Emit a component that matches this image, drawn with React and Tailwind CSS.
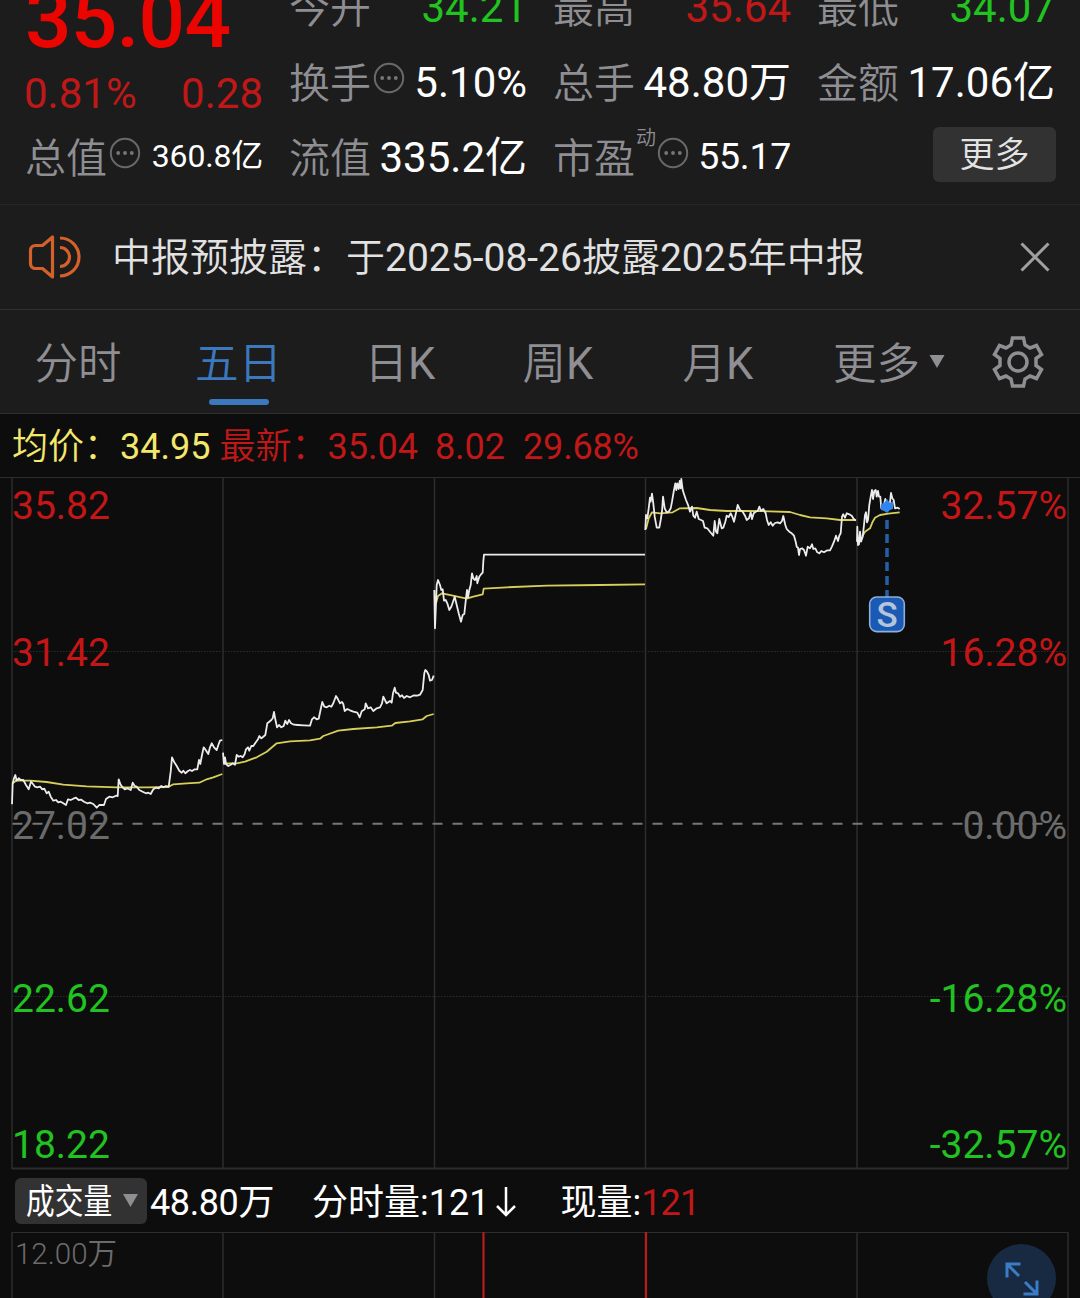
import React from 'react';
import clsx from 'clsx';

const FONT = 'font-[Roboto,"Noto_Sans_CJK_SC",sans-serif]';
const THIN_CJK = 'font-["Noto_Sans_CJK_SC_DemiLight","Noto_Sans_CJK_SC",sans-serif]';

// x,y pairs in thirds of a pixel, relative to each day's origin
const DAYS = [
  {
    origin: [0, 650],
    price:
      '36,463 38,400 42,385 46,375 50,392 56,385 62,390 70,390 78,405 86,418 93,395 99,402 105,410 112,412 120,410 127,418 133,416 140,430 146,425 152,440 160,452 168,450 175,457 182,455 190,460 198,465 204,448 212,450 220,446 228,443 236,450 244,449 252,455 262,460 270,458 280,462 290,473 298,465 306,465 312,465 318,447 328,440 338,442 348,437 353,438 356,388 361,402 366,410 374,418 382,415 392,420 398,398 404,408 410,410 418,420 428,425 438,430 445,428 452,432 460,418 468,413 476,415 484,408 490,412 498,408 506,410 512,365 516,322 522,335 530,348 538,362 545,368 550,362 556,370 564,363 570,360 576,363 584,358 592,358 597,330 601,342 606,315 611,292 617,300 625,312 630,292 635,280 642,292 650,300 656,282 660,272 667,270',
    average:
      '38,400 48,392 90,392 140,396 190,404 260,409 350,412 440,412 505,411 520,403 560,400 598,398 620,388 640,382 667,372',
  },
  {
    origin: [210, 640],
    price:
      '39,338 42,372 45,352 48,372 55,378 62,374 68,370 75,374 80,345 86,350 92,348 98,352 104,342 108,328 114,322 118,332 124,318 130,318 138,306 144,298 148,288 154,295 160,290 166,285 172,250 178,245 184,240 188,235 192,216 196,238 201,262 207,255 214,262 221,258 226,242 232,252 237,240 243,250 252,254 264,255 280,256 300,257 306,238 312,232 320,238 326,236 332,208 337,186 343,200 350,202 358,197 364,200 370,190 378,168 384,178 390,190 396,186 400,192 404,213 412,207 420,211 430,215 442,218 449,232 455,214 464,208 467,190 474,205 482,202 490,213 500,205 510,202 516,190 520,170 526,182 530,190 540,183 545,188 549,160 554,143 558,158 564,160 570,170 576,166 582,174 590,168 600,172 612,166 622,167 630,164 638,150 640,130 643,100 646,90 651,95 656,105 660,122 666,120 671,107',
    average:
      '45,370 80,370 105,365 140,352 170,335 200,310 240,304 300,301 330,296 340,288 385,272 430,267 500,262 545,257 556,249 600,244 638,238 650,228 671,222',
  },
  {
    origin: [420, 470],
    price:
      '43,360 45,475 48,400 50,345 54,330 60,345 64,360 68,358 72,392 77,390 82,400 88,420 94,410 98,398 104,380 110,405 116,430 123,455 128,435 133,432 138,385 141,360 144,382 148,360 152,345 156,310 160,325 165,330 170,318 172,340 178,320 184,312 188,308 190,275 192,254 675,254',
    average:
      '48,400 54,378 66,370 95,376 140,386 160,380 188,373 191,356 260,352 380,347 540,345 675,343',
  },
  {
    origin: [630, 465],
    price:
      '46,195 48,150 52,160 56,130 60,98 62,110 66,86 70,115 74,155 80,188 88,188 92,165 96,140 99,95 104,130 110,142 116,140 122,130 126,110 131,80 136,55 139,75 142,55 146,72 149,48 152,70 154,42 158,75 163,90 168,105 175,122 180,140 186,125 190,152 195,158 200,140 206,162 213,165 219,168 224,188 232,190 240,200 250,212 254,168 258,200 262,205 268,162 275,190 280,188 286,170 290,152 296,156 302,145 307,155 312,170 317,148 323,120 330,135 338,140 345,152 350,165 357,160 362,142 366,162 371,145 377,140 383,138 388,125 393,138 400,132 407,145 411,165 416,180 422,172 428,182 435,174 443,172 450,175 456,168 460,153 466,180 470,192 478,200 485,205 492,212 497,230 500,245 504,248 507,270 510,252 516,250 522,255 528,272 533,245 540,250 546,238 550,252 556,250 562,262 568,265 574,258 582,262 592,256 600,256 606,244 612,230 618,212 624,228 628,212 632,205 636,155 640,148 645,158 650,145 658,148 665,152 670,160 677,167',
    average:
      '48,192 56,160 66,142 90,145 128,142 150,130 200,129 240,135 290,138 350,138 420,139 480,141 510,150 540,157 590,160 630,165 678,165',
  },
  {
    origin: [840, 465],
    price:
      '51,230 52,185 54,240 57,238 60,200 63,230 68,215 72,180 75,150 78,142 81,172 84,165 88,120 92,95 96,75 99,102 103,78 107,75 110,95 114,78 117,95 121,95 124,130 130,130 136,102 142,120 149,120 153,84 157,100 161,105 165,130 173,128 179,132',
    average: '66,215 75,200 90,190 98,170 105,158 120,150 145,146 179,142',
  },
];

const DIVIDERS = [223, 434.5, 645.5, 857];

const AXIS = [
  { price: '35.82', pct: '32.57%', color: 'text-[#c41616]', pos: 'mt-[9px]' },
  { price: '31.42', pct: '16.28%', color: 'text-[#c41616]', pos: 'mt-[107px]' },
  { price: '27.02', pct: '0.00%', color: 'text-[#6b6b6b]', pos: 'mt-[133px]' },
  { price: '22.62', pct: '-16.28%', color: 'text-[#21c321]', pos: 'mt-[133px]' },
  { price: '18.22', pct: '-32.57%', color: 'text-[#21c321]', pos: 'mt-[106px]' },
];

const toPoints = ([ox, oy], pairs) =>
  pairs
    .split(' ')
    .map((p) => {
      const [x, y] = p.split(',').map(Number);
      return `${(ox + x / 3).toFixed(1)},${(oy + y / 3).toFixed(1)}`;
    })
    .join(' ');

const InfoDots = ({ className }) => (
  <svg viewBox="0 0 32 32" className={clsx('size-8 shrink-0', className)} fill="none">
    <circle cx="16" cy="16" r="14.2" stroke="#69696b" strokeWidth="2" />
    <circle cx="9.2" cy="16" r="1.9" fill="#77777a" />
    <circle cx="16" cy="16" r="1.9" fill="#77777a" />
    <circle cx="22.8" cy="16" r="1.9" fill="#77777a" />
  </svg>
);

const Cell = ({ label, value, info, sup, color = 'text-white', size = 'text-[42px]' }) => (
  <div className="flex h-[75px] items-center whitespace-nowrap">
    <span className={clsx('pb-[5px] text-[41px] leading-[60px] font-[350] text-[#8e8e93]', THIN_CJK)}>{label}</span>
    {sup && <span className="-mt-10 ml-px text-[20px] font-[350] text-[#8e8e93]">{sup}</span>}
    {info && <InfoDots className={clsx('-mt-[9px]', sup ? 'ml-px' : 'ml-0.5')} />}
    <span className={clsx('ml-auto', size, color)}>{value}</span>
  </div>
);

const Quote = () => (
  <header className="grid h-[205px] grid-cols-4 gap-x-[26px] overflow-hidden border-b border-[#262626] bg-[#1c1c1c] px-[25px]">
    <div className="-mt-7">
      <div className="h-[94px] text-[82px] leading-[94px] font-medium tracking-[-0.8px] text-[#eb0500]">35.04</div>
      <div className="-ml-px flex h-[54px] items-center justify-between text-[42px] text-[#c01818]">
        <span>0.81%</span>
        <span>0.28</span>
      </div>
      <Cell label="总值" value="360.8亿" info size="text-[32px] tracking-[-0.2px] pb-[3px]" />
    </div>
    <div className="-mt-[30px]">
      <Cell label="今开" value="34.21" color="text-[#21c321]" />
      <Cell label="换手" value="5.10%" info />
      <Cell label="流值" value="335.2亿" />
    </div>
    <div className="-mt-[30px]">
      <Cell label="最高" value="35.64" color="text-[#c01818]" />
      <Cell label="总手" value="48.80万" />
      <Cell label="市盈" value="55.17" info sup="动" size="text-[37.5px] tracking-[-0.3px] pb-0.5" />
    </div>
    <div className="-mt-[30px]">
      <Cell label="最低" value="34.07" color="text-[#21c321]" />
      <Cell label="金额" value="17.06亿" />
      <div className="-mr-px flex h-[69px] items-center justify-end">
        <button className="h-[55px] w-[123px] rounded-md bg-[#323232] pt-0.5 text-[35px] leading-none font-[350] text-[#e4e4e4]">更多</button>
      </div>
    </div>
  </header>
);

const Notice = () => (
  <div className="flex h-[105px] items-center border-b border-[#303030] bg-[#1c1c1c] pr-[29px] pl-7">
    <svg viewBox="0 0 54 46" className="h-[46px] w-[54px]" fill="none" stroke="#d4612a" strokeWidth="3.2">
      <path d="M24.500 3v40l-10-8.500H7.500c-3 0-5-2-5-5v-13c0-3 2-5 5-5h7z" strokeLinejoin="round" />
      <path d="M32 4a19 19 0 0 1 0 38M32 13.500a9.500 9.500 0 0 1 0 19" />
    </svg>
    <p className="ml-[30px] pb-px text-[39px] whitespace-nowrap text-[#e2e2e2]">
      <span className={clsx('font-[350]', THIN_CJK)}>中报预披露：于</span>2025-08-26
      <span className={clsx('font-[350]', THIN_CJK)}>披露</span>2025
      <span className={clsx('font-[350]', THIN_CJK)}>年中报</span>
    </p>
    <svg viewBox="0 0 32 32" className="ml-auto size-8" stroke="#a0a0a0" strokeWidth="3">
      <path d="M2.500 2.500l27 27M29.500 2.500l-27 27" />
    </svg>
  </div>
);

const Tab = ({ active, suffix, className, children }) => (
  <button
    className={clsx(
      'flex h-full flex-col items-center text-[43.5px] leading-[102px] whitespace-nowrap',
      active ? 'text-[#3b78be]' : 'text-[#8e8e93]',
      className
    )}
  >
    <span>
      <span className={clsx('font-[350]', THIN_CJK)}>{children}</span>
      {suffix}
    </span>
    {active && <span className="-mt-[17px] h-1.5 w-[60px] shrink-0 rounded-full bg-[#3b78be]" />}
  </button>
);

const Tabs = () => (
  <nav className="flex h-[104px] items-center border-b border-[#303030] bg-[#1c1c1c]">
    <Tab className="w-[156px]">分时</Tab>
    <Tab active className="w-[165px]">五日</Tab>
    <Tab suffix="K" className="w-[158px]">日</Tab>
    <Tab suffix="K" className="w-[158px]">周</Tab>
    <Tab suffix="K" className="w-[162px]">月</Tab>
    <Tab className="ml-[34px]">更多</Tab>
    <svg viewBox="0 0 16 14" className="ml-[9px] h-3.5 w-4" fill="#8e8e93">
      <path d="M.5 0h15L8 13z" />
    </svg>
    <svg viewBox="-27 -27 54 54" className="ml-[46px] size-[54px]" fill="none" stroke="#8e8e93" strokeWidth="3.500">
      <path d="M-5.500 -24H5.500L7 -17L12 -14L18.500 -16.500L23.500 -7.500L18 -3.500V3.500L23.500 7.500L18.500 16.500L12 14L7 17L5.500 24H-5.500L-7 17L-12 14L-18.500 16.500L-23.500 7.500L-18 3.500V-3.500L-23.500 -7.500L-18.500 -16.500L-12 -14L-7 -17Z" />
      <circle r="9" />
    </svg>
  </nav>
);

const PriceChart = () => (
  <section className="relative h-[693px]">
    <svg viewBox="0 477 1080 693" className="block h-[693px] w-[1080px]" fill="none">
      <g stroke="#2d2d2d" strokeWidth="1.500">
        <path d="M0 477H1080M12 1168.500H1068" strokeWidth="2" />
        <path d="M12 477V1169M1068 477V1169" />
        {DIVIDERS.map((x) => (
          <path key={x} d={`M${x} 478V1169`} />
        ))}
        <path d="M12 651.500H1068M12 996.500H1068" strokeWidth="1" strokeDasharray="1.500 1.500" />
      </g>
      <path d="M12.500 823.700H1068" stroke="#777" strokeWidth="2" strokeDasharray="10 10" />
      {DAYS.map(({ origin, price, average }) => (
        <g key={origin[0]} strokeLinejoin="round">
          <polyline points={toPoints(origin, average)} stroke="#d8ce5c" strokeWidth="1.800" />
          <polyline points={toPoints(origin, price)} stroke="#ececec" strokeWidth="1.800" />
        </g>
      ))}
      <path d="M887 520V597" stroke="#2460a8" strokeWidth="3.500" strokeDasharray="9 5" />
      <path d="M881 504l3-1 3-4 3 4 3-2v8l-3 1-3 3-3-2-3-1z" fill="#3184ee" />
      <rect x="869.700" y="597" width="34.600" height="34.600" rx="7" fill="#1a59b4" stroke="#8fafd8" strokeWidth="1.600" />
      <text x="887" y="627" textAnchor="middle" fontFamily="Roboto" fontSize="35" fontWeight="500" fill="#b5c4da">S</text>
    </svg>
    <div className="absolute inset-0 flex flex-col pr-[13px] pl-3 text-[39px] leading-10">
      {AXIS.map((row) => (
        <div key={row.price} className={clsx('flex h-10 justify-between', row.color, row.pos)}>
          <span>{row.price}</span>
          <span>{row.pct}</span>
        </div>
      ))}
    </div>
  </section>
);

const VolumeBar = () => (
  <div className="flex h-[62px] items-center pt-px pl-[15px] text-[36px] leading-none whitespace-nowrap text-white">
    <button className="-mt-0.5 flex h-[46px] w-[132px] items-center rounded-md bg-[#323232] pl-[11px]">
      <span className="w-[86px] origin-left scale-x-[0.82] pt-1 text-[35px]">成交量</span>
      <svg viewBox="0 0 15 13" className="ml-[11px] h-[13px] w-[15px]" fill="#8e8e93">
        <path d="M0 0h15L7.500 13z" />
      </svg>
    </button>
    <span className="ml-[3px] pt-0.5 tracking-[-0.4px]">48.80万</span>
    <span className="ml-[38px] pt-0.5">分时量:121</span>
    <svg viewBox="0 0 20 32" className="ml-[7px] h-8 w-5" fill="none" stroke="#fff" strokeWidth="2.500">
      <path d="M10 1v28M1 20l9 9 9-9" />
    </svg>
    <span className="ml-[44px] pt-0.5">现量:</span>
    <span className="pt-0.5 tracking-[-0.8px] text-[#c01818]">121</span>
  </div>
);

const VolumeChart = () => (
  <section className="relative h-[66px] overflow-hidden">
    <svg viewBox="0 1232 1080 66" className="block h-[66px] w-[1080px]" fill="none">
      <g stroke="#2d2d2d" strokeWidth="1.500">
        <path d="M12 1232.500H1068" strokeWidth="1" />
        <path d="M12 1232V1298M1068 1232V1298" />
        {DIVIDERS.map((x) => (
          <path key={x} d={`M${x} 1232V1298`} />
        ))}
      </g>
      <path d="M483.500 1232V1298M646 1232V1298" stroke="#b81c1c" strokeWidth="2.200" />
    </svg>
    <span className="absolute top-1.5 left-[15px] text-[29.5px] leading-8 font-[350] text-[#6b6b6b]">12.00万</span>
    <button className="absolute top-3 right-6 flex size-[69px] items-center justify-center rounded-full bg-[#182a41]">
      <svg viewBox="0 0 34 34" className="size-[34px]" fill="none" stroke="#3b7cc6" strokeWidth="3">
        <path d="M15.500 2H2v13.500M2 2l12 12M18.500 32H32V18.500M32 32L20 20" />
      </svg>
    </button>
  </section>
);

export default function App() {
  return (
    <div className={clsx('h-[1298px] w-[1080px] overflow-hidden bg-[#0d0d0d]', FONT)}>
      <Quote />
      <Notice />
      <Tabs />
      <div className="flex h-[63px] items-center pt-0.5 pl-3 text-[36px] whitespace-nowrap text-[#c01818]">
        <span className="text-[#f3e76c]">
          <span className="font-[350]">均价：</span>34.95
        </span>
        <span className="ml-[9px]">
          <span className="font-[350]">最新：</span>35.04
        </span>
        <span className="ml-[17px]">8.02</span>
        <span className="ml-[18px] tracking-[-0.2px]">29.68%</span>
      </div>
      <PriceChart />
      <VolumeBar />
      <VolumeChart />
    </div>
  );
}
